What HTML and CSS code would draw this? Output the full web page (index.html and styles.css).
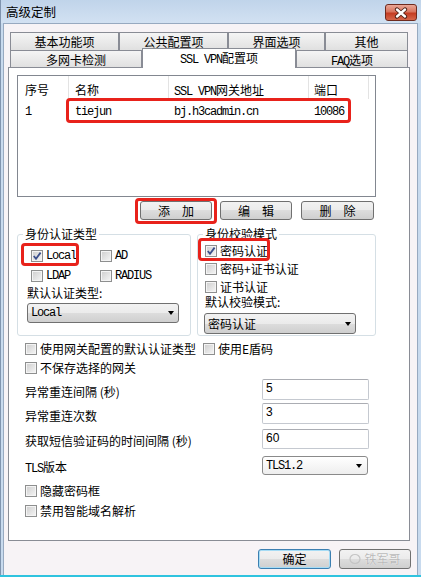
FILE: index.html
```html
<!DOCTYPE html>
<html lang="zh-CN">
<head>
    <meta charset="UTF-8">
    <title>高级定制</title>
    <link rel="stylesheet" href="styles.css">
</head>
<body>
    <div class="window">
        <div class="titlebar">
            <span class="title">高级定制</span>
            <div class="close-btn">
                <svg width="16" height="12" viewBox="0 0 16 12">
                    <path d="M4 2.5 L12 9.5 M12 2.5 L4 9.5" stroke="#4a1e14" stroke-width="4.2" stroke-linecap="round"/>
                    <path d="M4 2.5 L12 9.5 M12 2.5 L4 9.5" stroke="#fff" stroke-width="2.4" stroke-linecap="round"/>
                </svg>
            </div>
        </div>

        <div class="client">
            <div class="tabs">
                <div class="tab-row top">
                    <div class="tab tab-basic">基本功能项</div>
                    <div class="tab tab-common">公共配置项</div>
                    <div class="tab tab-ui">界面选项</div>
                    <div class="tab tab-other">其他</div>
                </div>
                <div class="tab-row bottom">
                    <div class="tab tab-nic">多网卡检测</div>
                    <div class="tab tab-ssl active"><span class="en">SSL VPN</span>配置项</div>
                    <div class="tab tab-faq"><span class="en">FAQ</span>选项</div>
                </div>
            </div>

            <div class="panel">
                <div class="list">
                    <div class="list-head">
                        <div class="col c1">序号</div>
                        <div class="col c2">名称</div>
                        <div class="col c3"><span class="en">SSL VPN</span>网关地址</div>
                        <div class="col c4">端口</div>
                    </div>
                    <div class="list-row">
                        <div class="cell c1"><span class="en">1</span></div>
                        <div class="cell c2"><span class="en">tiejun</span></div>
                        <div class="cell c3"><span class="en">bj.h3cadmin.cn</span></div>
                        <div class="cell c4"><span class="en">10086</span></div>
                    </div>
                    <div class="mark mark-row"></div>
                </div>

                <div class="btn-row">
                    <div class="marked">
                        <button class="btn btn-add">添　加</button>
                        <div class="mark mark-add"></div>
                    </div>
                    <button class="btn btn-edit">编　辑</button>
                    <button class="btn btn-del">删　除</button>
                </div>

                <div class="groups">
                    <div class="group auth">
                        <div class="group-title">身份认证类型</div>
                        <div class="cb-grid">
                            <div class="cb-item"><span class="cb checked"><svg width="10" height="10" viewBox="0 0 10 10"><path d="M1.8 5 L4 7.8 L8.6 1.6" fill="none" stroke="#3b4f8c" stroke-width="1.8"/></svg></span><span class="en">Local</span></div>
                            <div class="cb-item"><span class="cb"></span><span class="en">AD</span></div>
                            <div class="cb-item"><span class="cb"></span><span class="en">LDAP</span></div>
                            <div class="cb-item"><span class="cb"></span><span class="en">RADIUS</span></div>
                        </div>
                        <div class="group-label">默认认证类型:</div>
                        <div class="select select-auth"><span class="en">Local</span><span class="arrow"></span></div>
                        <div class="mark mark-local"></div>
                    </div>
                    <div class="group verify">
                        <div class="group-title">身份校验模式</div>
                        <div class="cb-list">
                            <div class="cb-item"><span class="cb checked"><svg width="10" height="10" viewBox="0 0 10 10"><path d="M1.8 5 L4 7.8 L8.6 1.6" fill="none" stroke="#3b4f8c" stroke-width="1.8"/></svg></span>密码认证</div>
                            <div class="cb-item"><span class="cb"></span>密码+证书认证</div>
                            <div class="cb-item"><span class="cb"></span>证书认证</div>
                        </div>
                        <div class="group-label">默认校验模式:</div>
                        <div class="select select-verify"><span>密码认证</span><span class="arrow"></span></div>
                        <div class="mark mark-pwd"></div>
                    </div>
                </div>

                <div class="opt-row first">
                    <div class="cb-item"><span class="cb"></span>使用网关配置的默认认证类型</div>
                    <div class="cb-item ukey"><span class="cb"></span>使用E盾码</div>
                </div>
                <div class="opt-row">
                    <div class="cb-item"><span class="cb"></span>不保存选择的网关</div>
                </div>

                <div class="field f1">
                    <span class="field-label">异常重连间隔 (秒)</span>
                    <div class="input">5</div>
                </div>
                <div class="field f2">
                    <span class="field-label">异常重连次数</span>
                    <div class="input">3</div>
                </div>
                <div class="field f3">
                    <span class="field-label">获取短信验证码的时间间隔 (秒)</span>
                    <div class="input">60</div>
                </div>
                <div class="field f4">
                    <span class="field-label"><span class="en">TLS</span>版本</span>
                    <div class="select select-tls"><span class="en">TLS1.2</span><span class="arrow"></span></div>
                </div>

                <div class="opt-row hide">
                    <div class="cb-item"><span class="cb"></span>隐藏密码框</div>
                </div>
                <div class="opt-row dns">
                    <div class="cb-item"><span class="cb"></span>禁用智能域名解析</div>
                </div>
            </div>

            <div class="footer">
                <button class="btn btn-ok">确定</button>
                <button class="btn btn-cancel">
                    <svg width="14" height="12" viewBox="0 0 14 12"><ellipse cx="6" cy="6" rx="5" ry="4.5" fill="none" stroke="#c4c4c4" stroke-width="1.2"/></svg>
                    <span class="watermark">铁军哥</span>
                </button>
            </div>
        </div>
        <div class="edge"></div>
    </div>
</body>
</html>
```

FILE: styles.css
```css
body {
    margin: 0;
    font-family: "Noto Sans CJK SC", sans-serif;
    font-size: 12px;
    color: #000;
    background: #fff;
}

.en {
    font-family: "Liberation Mono", monospace;
    font-size: 12px;
    letter-spacing: -1.2px;
}

.window {
    width: 421px;
    height: 577px;
    box-sizing: border-box;
    border-left: 1px solid #8094ae;
    background: #c8daee;
}

.titlebar {
    height: 23px;
    display: flex;
    align-items: flex-start;
    background: linear-gradient(#c0d4ea, #d2e1f2);
}

.title {
    margin: 4px 0 0 5px;
    line-height: 16px;
    font-size: 12.5px;
}

.close-btn {
    margin: 4px 4px 0 auto;
    width: 32px;
    height: 17px;
    box-sizing: border-box;
    border: 1px solid #6e2a1e;
    border-radius: 3px;
    background: linear-gradient(#e9a696 0%, #d8745e 45%, #c43c22 55%, #d5664a 100%);
    display: flex;
    align-items: center;
    justify-content: center;
}

.client {
    margin-left: 2px;
    width: 415px;
    height: 552px;
    box-sizing: border-box;
    border: 1px solid #97a9c0;
    border-bottom: none;
    background: #f7f3f6;
}

.edge {
    height: 2px;
    background: #2fc3df;
    margin-left: -1px;
}

/* tabs */
.tabs {
    margin: 8px 0 0 6px;
    width: 398px;
}

.tab-row {
    display: flex;
}

.tab {
    box-sizing: border-box;
    border: 1px solid #898c95;
    border-bottom: none;
    background: linear-gradient(#f5f5f5, #e0e0e0);
    text-align: center;
    white-space: nowrap;
}

.tab-row.top .tab {
    height: 18px;
    line-height: 17px;
}

.tab-row.bottom {
    height: 17px;
    align-items: flex-end;
}

.tab-row.bottom .tab {
    height: 17px;
    padding-top: 2px;
    line-height: 14px;
}

.tab-row.bottom .tab.active {
    height: 20px;
    margin-bottom: -1px;
    background: #fff;
    position: relative;
    z-index: 1;
}

.tab-basic { width: 109px; }
.tab-common { width: 109px; }
.tab-ui { width: 97px; }
.tab-other { width: 83px; }
.tab-nic { width: 132px; }
.tab-ssl { width: 154px; }
.tab-faq { width: 112px; }

/* panel */
.panel {
    margin-left: 4px;
    width: 402px;
    height: 474px;
    box-sizing: border-box;
    border: 1px solid #898c95;
    background: #fff;
}

.list {
    margin: 7px 0 0 8px;
    width: 359px;
    height: 122px;
    box-sizing: border-box;
    border: 1px solid #828790;
    position: relative;
}

.list-head {
    display: flex;
    height: 23px;
}

.list-head .col {
    box-sizing: border-box;
    border-right: 1px solid #e3e3e3;
    padding-top: 4px;
    line-height: 19px;
    white-space: nowrap;
}

.list-row {
    display: flex;
    height: 20px;
    line-height: 22px;
}

.c1 { width: 51px; padding-left: 7px; box-sizing: border-box; }
.c2 { width: 100px; padding-left: 6px; box-sizing: border-box; }
.c3 { width: 140px; padding-left: 5px; box-sizing: border-box; }
.c4 { width: 60px; padding-left: 5px; box-sizing: border-box; }

.mark {
    position: absolute;
    box-sizing: border-box;
    border: 3px solid #e8221b;
    border-radius: 4px;
}

.mark-row {
    left: 48px;
    top: 22px;
    width: 285px;
    height: 25px;
}

/* buttons */
.btn {
    box-sizing: border-box;
    height: 19px;
    padding: 0;
    border: 1px solid #707070;
    border-radius: 3px;
    background: linear-gradient(#f2f2f2 0%, #ebebeb 50%, #dddddd 50%, #cfcfcf 100%);
    font-family: "Noto Sans CJK SC", sans-serif;
    font-size: 12px;
    line-height: 17px;
    color: #000;
}

.btn-row {
    display: flex;
    height: 19px;
    margin-top: 4px;
    padding-left: 131px;
}

.marked {
    position: relative;
}

.btn-add { width: 72px; }
.btn-edit { width: 72px; margin-left: 8px; }
.btn-del { width: 73px; margin-left: 9px; }

.mark-add {
    left: -5px;
    top: -3px;
    width: 82px;
    height: 26px;
}

/* group boxes */
.groups {
    display: flex;
    gap: 6px;
    margin: 14px 0 0 8px;
}

.group {
    position: relative;
    height: 102px;
    box-sizing: border-box;
    border: 1px solid #d5dfe5;
    border-radius: 3px;
}

.group.auth { width: 174px; }
.group.verify { width: 179px; }

.group-title {
    width: fit-content;
    margin: -8px 0 0 5px;
    padding: 0 2px;
    line-height: 14px;
    background: #fff;
}

.cb-item {
    display: flex;
    align-items: center;
    height: 12px;
    line-height: 12px;
    white-space: nowrap;
}

.cb {
    flex: none;
    width: 12px;
    height: 12px;
    box-sizing: border-box;
    margin-right: 3px;
    border: 1px solid #8e8f8f;
    background: linear-gradient(135deg, #cdcdcd, #f6f6f6);
    box-shadow: inset 0 0 0 1px #f4f4f4;
    display: flex;
    align-items: center;
    justify-content: center;
}

.cb-grid {
    display: grid;
    grid-template-columns: 69px auto;
    row-gap: 8px;
    margin-top: 9px;
    padding-left: 13px;
}

.cb-list {
    display: flex;
    flex-direction: column;
    gap: 6px;
    margin-top: 4px;
    padding-left: 7px;
}

.group-label {
    line-height: 14px;
}

.auth .group-label {
    margin-top: 4px;
    padding-left: 9px;
}

.verify .group-label {
    margin-top: 2px;
    padding-left: 7px;
}

.select {
    box-sizing: border-box;
    display: flex;
    align-items: center;
    justify-content: space-between;
    border: 1px solid #707070;
    border-radius: 3px;
    background: linear-gradient(#f2f2f2 0%, #ebebeb 50%, #dddddd 50%, #cfcfcf 100%);
    padding: 0 4px 0 3px;
}

.arrow {
    width: 0;
    height: 0;
    border-left: 3.5px solid transparent;
    border-right: 3.5px solid transparent;
    border-top: 4px solid #000;
}

.select-auth {
    margin: 3px 0 0 9px;
    width: 152px;
    height: 20px;
}

.select-verify {
    margin: 4px 0 0 6px;
    width: 152px;
    height: 21px;
}

.mark-local {
    left: 3px;
    top: 8px;
    width: 58px;
    height: 23px;
}

.mark-pwd {
    left: 0;
    top: 3px;
    width: 72px;
    height: 23px;
}

/* options */
.opt-row {
    display: flex;
    height: 12px;
    padding-left: 16px;
    margin-top: 7px;
}

.ukey {
    margin-left: 7px;
}

.opt-row.hide { margin-top: 9px; }
.opt-row.dns { margin-top: 8px; }

.field {
    display: grid;
    grid-template-columns: 253px 107px;
    align-items: center;
}

.field-label {
    padding-left: 16px;
    padding-top: 3px;
    white-space: nowrap;
}

.input {
    box-sizing: border-box;
    height: 21px;
    border: 1px solid #c5c9d0;
    border-top-color: #abadb3;
    border-radius: 2px;
    background: #fff;
    padding: 1px 3px;
    font-family: "Liberation Sans", sans-serif;
    font-size: 12px;
    line-height: 15px;
}

.f1 { margin-top: 5px; }
.f2 { margin-top: 3px; }
.f3 { margin-top: 5px; }
.f3 .input { height: 20px; }
.f4 { margin-top: 6px; }

.select-tls {
    width: 106px;
    height: 19px;
    border-color: #8a8a8a;
    background: linear-gradient(#ffffff, #eeeeee);
    padding-right: 5px;
}

/* footer */
.footer {
    display: flex;
    margin-top: 8px;
    padding-left: 254px;
}

.footer .btn {
    height: 20px;
    line-height: 18px;
}

.btn-ok {
    width: 73px;
    border-color: #3c7fb1;
    box-shadow: inset 0 0 0 1px #a6dcf5;
}

.btn-cancel {
    width: 72px;
    margin-left: 8px;
    display: flex;
    align-items: center;
    justify-content: center;
    gap: 1px;
}

.watermark {
    color: #b9b9b9;
    text-shadow: 0 0 1px #fff;
}
```
